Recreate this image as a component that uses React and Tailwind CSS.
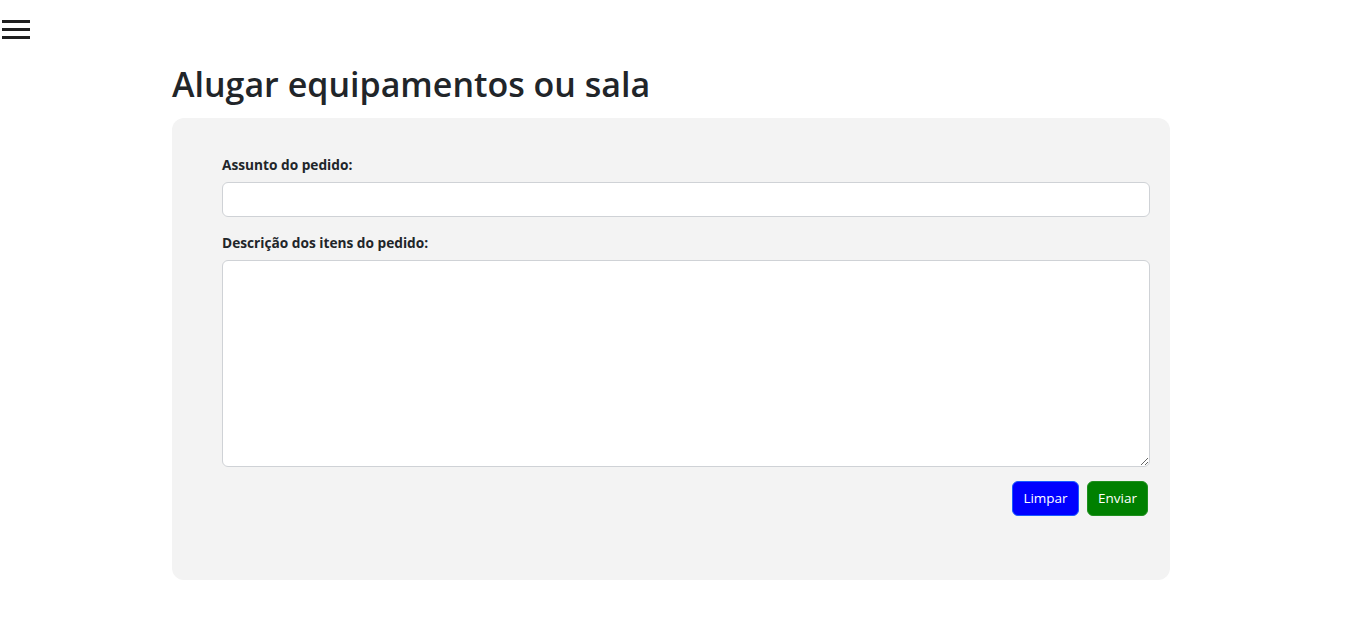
export default function App() {
  return (
    <div className="min-h-[627px] bg-white text-[#212529]" style={{ fontFamily: '"Open Sans", "Noto Sans", sans-serif' }}>
      <div className="h-[60px] pl-[2px] pt-[20px]">
        <div className="flex w-[28px] flex-col gap-[5px]">
          <span className="block h-[3px] bg-[#1f1f1f]" />
          <span className="block h-[3px] bg-[#1f1f1f]" />
          <span className="block h-[3px] bg-[#1f1f1f]" />
        </div>
      </div>
      <div className="ml-[172px] w-[998px]">
        <h1 className="text-[34px] font-semibold leading-[48px] mb-[10px]">Alugar equipamentos ou sala</h1>
        <div className="rounded-[12px] bg-[#f3f3f3] pl-[50px] pr-[20px] pt-[38px] pb-[64px]">
          <label className="block text-[13.7px] font-bold leading-[18px] mb-[8px]">Assunto do pedido:</label>
          <input className="block h-[35px] w-full rounded-[6px] border border-[#cfd2d6] bg-white" />
          <label className="mt-[17px] block text-[13.7px] font-bold leading-[18px] mb-[8px]">Descrição dos itens do pedido:</label>
          <textarea className="block h-[207px] w-full rounded-[6px] border border-[#cfd2d6] bg-white" />
          <div className="mt-[14px] flex justify-end gap-[8px] pr-[2px]">
            <button className="h-[35px] w-[67px] rounded-[6px] border border-[#1a5cff] bg-[#0000ff] text-[13.5px] text-white">Limpar</button>
            <button className="h-[35px] w-[61px] rounded-[6px] border border-[#1e8f1e] bg-[#008000] text-[13.5px] text-white">Enviar</button>
          </div>
        </div>
      </div>
    </div>
  );
}
